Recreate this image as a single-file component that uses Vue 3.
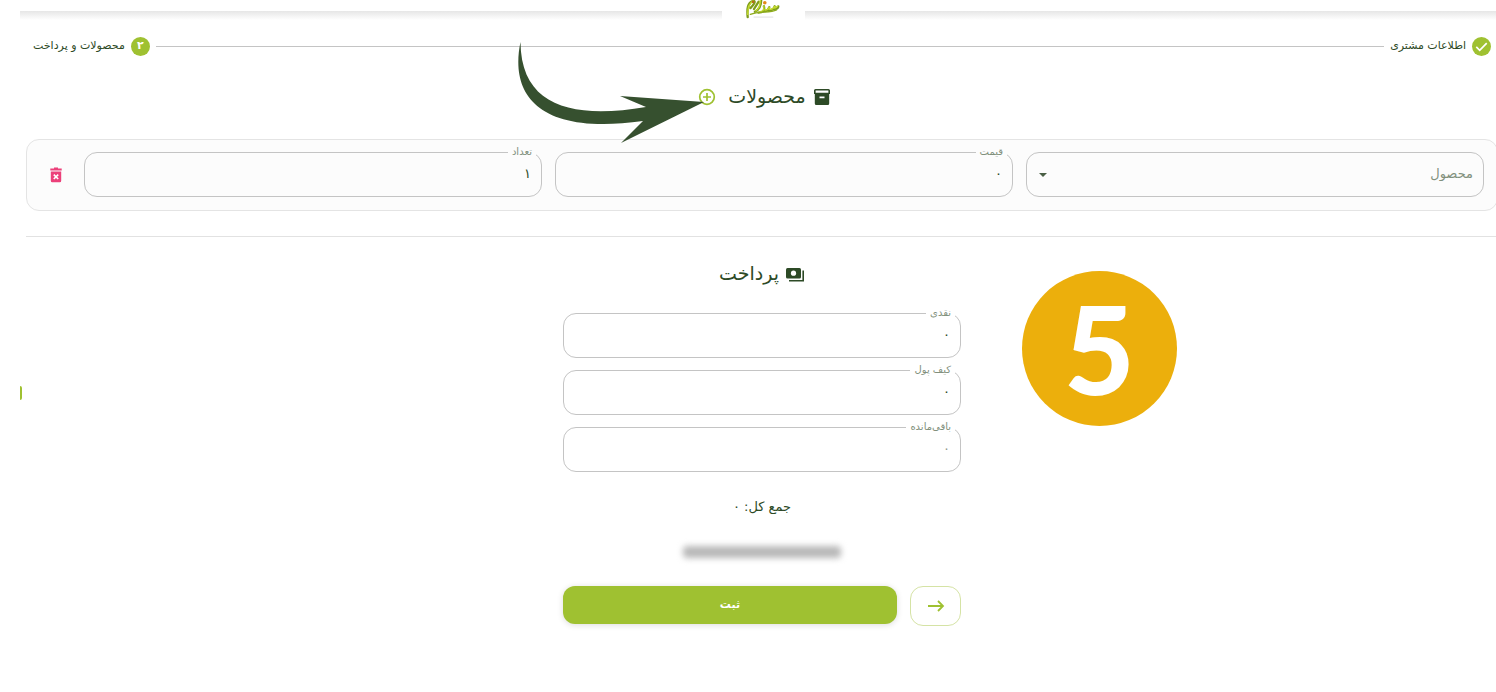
<script setup>
import { ref } from 'vue'

const price = ref('۰')
const count = ref('۱')
const product = ref('')
const payments = ref([
  { id: 'cash', label: 'نقدی', value: '۰', disabled: false },
  { id: 'wallet', label: 'کیف پول', value: '۰', disabled: false },
  { id: 'remaining', label: 'باقی‌مانده', value: '۰', disabled: true },
])
</script>

<template>
  <div class="page" dir="rtl">
    <header class="topbar">
      <a class="logo" href="#" aria-label="صفحه اصلی">
        <svg width="36" height="22" viewBox="0 0 40 22" preserveAspectRatio="xMidYMin meet" fill="none" stroke-linecap="round">
          <path d="M3 19C2 9 3 3 9 1c4 0 0 5-3 8M10 10l5-8M11 13C15 11 18 6 18 0M15 14c6 0 7-3 6-7M21 12c3 1 5-1 6-4M26 11c4 1 6-1 7-4M32 10c3 0 5-1 5-3" stroke="#7f9c1c" stroke-width="2.600" />
          <path d="M3 16C3 9 4 4 9 1M12 12c3-2 5-6 5-12M16 13c5 0 5-3 5-6M22 11c3 1 4-1 5-3M27 10c3 1 5-1 6-3M33 9l3-2" stroke="#c3da2c" stroke-width="1.600" />
          <path d="M6 16C16 12 28 15 35 11" stroke="#8eac1c" stroke-width="1.500" />
          <path d="M10 19h21" stroke="#dcdcdc" stroke-width="1" />
          <circle cx="22" cy="3" r="2" fill="#e38a16" />
          <circle cx="9" cy="2" r="1.500" fill="#b56a18" />
        </svg>
      </a>
    </header>
    <span class="edge-handle" aria-hidden="true"></span>

    <main class="content">
      <ol class="stepper">
        <li class="step">
          <svg class="dot" viewBox="0 0 20 20"><circle cx="10" cy="10" r="10" fill="#9fc131" /><path d="M4.500 10.500l3.600 3.500L15.500 6.500" fill="none" stroke="#fff" stroke-width="1.800" /></svg>
          <span>اطلاعات مشتری</span>
        </li>
        <li class="connector" aria-hidden="true"></li>
        <li class="step">
          <span class="dot number">۲</span>
          <span>محصولات و پرداخت</span>
        </li>
      </ol>

      <div class="heading products-heading">
        <svg width="20" height="20" viewBox="0 0 20 20"><path fill="#2d4a26" fill-rule="evenodd" d="M3.500 2h13a1.500 1.500 0 0 1 1.500 1.500V7h-.8v9.500a1.500 1.500 0 0 1-1.500 1.500H4.300a1.500 1.500 0 0 1-1.500-1.500V7H2V3.500A1.500 1.500 0 0 1 3.500 2zM3.600 3.600v2.200h12.800V3.600zM7.500 9.500v1.700h5V9.500z" /></svg>
        <h2>محصولات</h2>
        <button class="icon-button add" type="button" aria-label="افزودن محصول">
          <svg width="18" height="18" viewBox="0 0 18 18" fill="none" stroke="#9fc131" stroke-width="1.700"><circle cx="9" cy="9" r="7.300" /><path d="M9 5v8M5 9h8" /></svg>
        </button>
      </div>

      <section class="product-row">
        <div class="field select-field">
          <select v-model="product" aria-label="محصول">
            <option value="">محصول</option>
          </select>
          <svg class="caret" width="8" height="4" viewBox="0 0 8 4"><path d="M0 0h8L4 4z" fill="#4a5f45" /></svg>
        </div>
        <fieldset class="field">
          <legend><label for="price">قیمت</label></legend>
          <input id="price" v-model="price" type="text" />
        </fieldset>
        <fieldset class="field">
          <legend><label for="count">تعداد</label></legend>
          <input id="count" v-model="count" type="text" />
        </fieldset>
        <button class="icon-button delete" type="button" aria-label="حذف">
          <svg width="12" height="16" viewBox="0 0 12 16"><path fill="#ec407a" d="M4 .5h4v1h3.700v2H.3v-2H4z" /><path fill="#ec407a" d="M.8 4.500h10.400v9.300a1.500 1.500 0 0 1-1.500 1.500H2.300a1.500 1.500 0 0 1-1.500-1.500z" /><path d="M3.800 7.600l4.400 4.400M8.200 7.600L3.800 12" stroke="#fff" stroke-width="1.600" /></svg>
        </button>
      </section>

      <hr class="divider" />

      <form class="payment" @submit.prevent>
        <div class="heading">
          <svg width="20" height="20" viewBox="0 0 20 20"><rect x="1" y="4" width="15" height="10.500" rx="1.500" fill="#2d4a26" /><circle cx="8.500" cy="9.200" r="2.600" fill="#fff" /><path d="M18.200 6.500v10.200H4" fill="none" stroke="#2d4a26" stroke-width="1.600" /></svg>
          <h2>پرداخت</h2>
        </div>
        <div class="payment-fields">
          <fieldset v-for="p in payments" :key="p.id" class="field" :class="{ disabled: p.disabled }">
            <legend><label :for="p.id">{{ p.label }}</label></legend>
            <input :id="p.id" v-model="p.value" type="text" :disabled="p.disabled" />
          </fieldset>
        </div>
        <p class="total">جمع کل: ۰</p>
        <div class="concealed" aria-hidden="true"></div>
        <div class="actions">
          <button class="back" type="button" aria-label="بازگشت">
            <svg width="18" height="14" viewBox="0 0 18 14" fill="none" stroke="#9fc131" stroke-width="1.800"><path d="M1 7h15M11 2l5 5-5 5" /></svg>
          </button>
          <button class="submit" type="submit">ثبت</button>
        </div>
      </form>
    </main>

    <svg class="pointer" width="190" height="104" viewBox="0 0 190 104" aria-hidden="true"><path fill="#36502f" d="M3.500 0C-7 50 18 94 126 79L104 101 187 60 103 54 129 65C58 77 4 66 3.500 0z" /></svg>
    <div class="badge">5</div>
  </div>
</template>

<style>
body {
  margin: 0;
  background: #fff;
}
</style>

<style scoped>
.page {
  position: relative;
  overflow: hidden;
  padding-bottom: 64px;
  color: #2d4a26;
  font-family: "DejaVu Sans", sans-serif;
}
.topbar {
  display: flex;
  justify-content: center;
  height: 20px;
  margin-left: 20px;
  padding-left: 10px;
  background: linear-gradient(#fff 11px, #e6e6e6 11px, #fff 20px);
}
.logo {
  display: flex;
  justify-content: center;
  width: 83px;
  background: #fff;
}
.edge-handle {
  position: absolute;
  left: 20px;
  top: 386px;
  width: 2px;
  height: 14px;
  border-radius: 0 2px 2px 0;
  background: #9fc131;
}
.content {
  margin: 0 -2px 0 26px;
}
.stepper {
  display: flex;
  align-items: center;
  gap: 6px;
  height: 20px;
  margin: 16px 0 0;
  padding: 0 7px;
  list-style: none;
}
.step {
  display: flex;
  align-items: center;
  gap: 6px;
  font-size: 11px;
  line-height: 18px;
}
.dot {
  width: 19px;
  height: 19px;
}
.number {
  border-radius: 50%;
  background: #9fc131;
  color: #fff;
  font-weight: 700;
  text-align: center;
}
.connector {
  flex: 1;
  height: 1px;
  background: #c4c4c4;
}
.heading {
  display: flex;
  align-items: center;
  justify-content: center;
  gap: 6px;
  height: 32px;
}
.heading h2 {
  margin: 0;
  font-size: 19px;
  font-weight: 400;
  line-height: 28px;
  padding-bottom: 2px;
}
.products-heading {
  margin-top: 25px;
}
.icon-button {
  display: flex;
  align-items: center;
  justify-content: center;
  padding: 0;
  border: 0;
  background: none;
}
.add {
  width: 30px;
  height: 32px;
}
.product-row {
  display: flex;
  align-items: flex-end;
  gap: 13px;
  margin-top: 26px;
  padding: 7px 13px 13px;
  border: 1px solid #e4e4e4;
  border-radius: 13px;
  background: #fcfcfc;
}
.field {
  box-sizing: border-box;
  flex: 1;
  min-width: 0;
  height: 50px;
  margin: 0;
  padding: 0 10px;
  border: 1px solid #c4c4c4;
  border-radius: 13px;
}
.field legend {
  height: 11px;
  margin-right: -5px;
  padding: 0 4px;
  color: #81907c;
  font-size: 10px;
}
.field label {
  display: block;
  line-height: 9px;
}
.field input,
.field select {
  display: block;
  width: 100%;
  height: 30px;
  padding: 0;
  border: 0;
  outline: 0;
  background: none;
  color: #2d4a26;
  font-family: inherit;
  font-size: 13px;
}
.field.disabled input {
  color: #93998f;
}
.select-field {
  display: flex;
  align-items: center;
  height: 45px;
}
.field select {
  appearance: none;
  height: 43px;
  padding-bottom: 3px;
  color: #81907c;
}
.caret {
  flex: none;
  margin-left: 2px;
}
.delete {
  width: 31px;
  height: 44px;
}
.divider {
  height: 1px;
  margin: 25px 0 0;
  border: 0;
  background: #e2e2e2;
}
.payment {
  max-width: 398px;
  margin: 21px auto 0;
}
.payment-fields {
  display: flex;
  flex-direction: column;
  gap: 7px;
  margin-top: 18px;
}
.payment-fields .field {
  flex: none;
}
.total {
  margin: 24px 0 0;
  font-size: 13px;
  line-height: 22px;
  text-align: center;
}
.concealed {
  width: 158px;
  height: 12px;
  margin: 28px auto 0;
  border-radius: 4px;
  background: #b8b8b8;
  filter: blur(3px);
}
.actions {
  display: flex;
  gap: 13px;
  margin-top: 28px;
}
.back {
  display: flex;
  align-items: center;
  justify-content: center;
  width: 51px;
  height: 40px;
  padding: 0;
  border: 1px solid #d5e3a5;
  border-radius: 13px;
  background: #fff;
}
.submit {
  flex: 1;
  height: 38px;
  padding: 0 0 2px;
  border: 0;
  border-radius: 12px;
  background: #9fc131;
  box-shadow: 0 1px 6px rgba(0, 0, 0, 0.14);
  color: #fff;
  font-family: inherit;
  font-size: 11px;
  font-weight: 700;
}
.pointer {
  position: absolute;
  left: 517px;
  top: 42px;
}
.badge {
  position: absolute;
  left: 1022px;
  top: 271px;
  width: 155px;
  height: 155px;
  border-radius: 50%;
  background: #ecaf0c;
  color: #fff;
  font: 900 122px/155px Lato, sans-serif;
  text-align: center;
}
</style>
